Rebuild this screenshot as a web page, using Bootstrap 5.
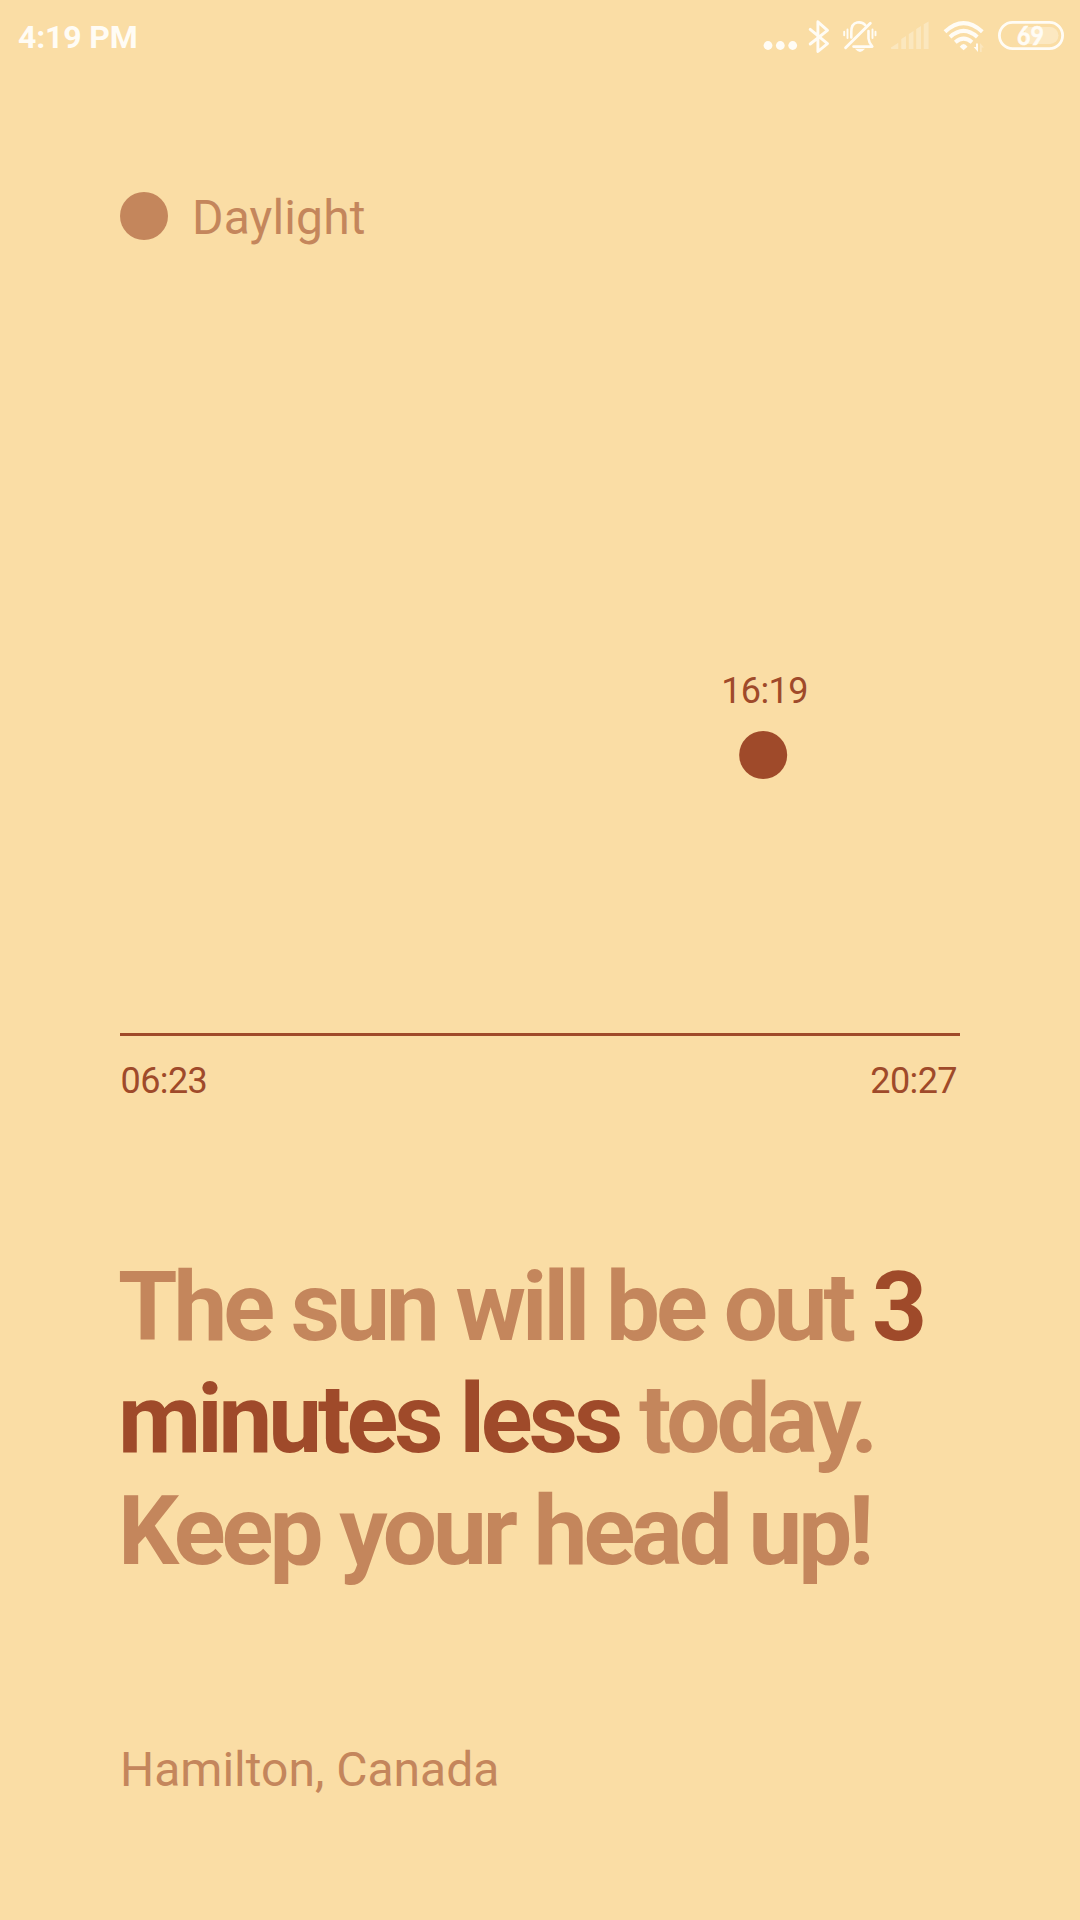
<!DOCTYPE html>
<html lang="en">
<head>
<meta charset="utf-8">
<meta name="viewport" content="width=device-width, initial-scale=1">
<title>Daylight</title>
<link rel="stylesheet" href="https://cdn.jsdelivr.net/npm/bootstrap@5.3.0/dist/css/bootstrap.min.css">
<style>
  body { background: #fadda5; color: #c4865c; font-family: Roboto, "Liberation Sans", sans-serif; }
  .screen { height: 1920px; width: 1080px; }
  .status { height: 72px; padding: 0 14px 0 18px; color: #fffcf5; }
  .clock { font-size: 32px; font-weight: 700; line-height: 38px; padding-top: 2px; letter-spacing: -.15px; }
  .content { padding: 116px 120px 0; }
  .brand { height: 56px; gap: 24px; font-size: 48px; line-height: 56px; }
  .brand span { padding-top: 4px; letter-spacing: .15px; }
  .disc { width: 48px; height: 48px; background: currentColor; }
  .strong-ink { color: #9f4a2a; }
  .sky { height: 789px; }
  .marker { top: 426px; transform: translateX(-50%); gap: 19px; }
  .marker-time { padding-left: 3px; }
  .times { font-size: 36px; line-height: 42px; letter-spacing: -.6px; }
  .horizon { border-top: 3px solid #9f4a2a; padding: 24px 3px 0 .6px; }
  .message { font-size: 96px; line-height: 112px; font-weight: 700; letter-spacing: -4.02px; margin: 149px -40px 0 -2px; }
  .place { font-size: 48px; line-height: 56px; margin-top: 155px; }
</style>
</head>
<body>
<div class="screen d-flex flex-column overflow-hidden">
  <header class="status d-flex align-items-start justify-content-between">
    <div class="clock align-self-start mt-3">4:19 PM</div>
    <div class="d-flex">
      <svg width="43" height="72" viewBox="760 0 43 72" fill="currentColor"><circle cx="768" cy="45.5" r="4.4"/><circle cx="780.3" cy="45.5" r="4.4"/><circle cx="792.7" cy="45.5" r="4.4"/></svg>
      <svg width="34" height="72" viewBox="803 0 34 72" fill="none" stroke="currentColor" stroke-width="2.9" stroke-linecap="round" stroke-linejoin="round"><path d="M810.2 29.3 827.5 43.6 817.9 51.5V21.8L827.5 30.3 810.2 44"/></svg>
      <svg width="48" height="72" viewBox="837 0 48 72" fill="none" stroke="currentColor" stroke-width="2.6" stroke-linecap="round" stroke-linejoin="round"><path d="M851.3 37.5V32C851.3 19.5 862 21.5 865.3 25.2M868.5 31V38.500Q868.800 42.500 872.300 46.600H853.500"/><path d="M870.300 23.200 845.600 47.700" stroke-width="2.900"/><path d="M855 48.800H865Q860 55 855 48.800Z" fill="currentColor" stroke="none"/><path d="M844.200 31.700V35.300M847.500 29.500V38M872.500 29.500V38M875.500 31.700V35.300" stroke-width="1.900"/></svg>
      <svg width="50" height="72" viewBox="885 0 50 72" fill="currentColor" opacity=".32"><path d="M891 47.500 898.300 42.800V49H892Q890.500 49 891 47.500ZM901.300 39 906 36V49H901.300ZM908.800 34 913.500 31V49H908.800ZM916.200 29 921 26V49H916.200ZM923.700 24.200 928.600 21.500V49H923.700Z"/></svg>
      <svg width="58" height="72" viewBox="935 0 58 72" fill="none" stroke="currentColor" stroke-width="4"><path d="M945 31.700Q963.500 14.500 982.300 31.700M950 36.900Q963.600 24.700 977.300 36.900M955.300 42.200Q963.600 35 972 42.200"/><path d="M963.600 50.200 959.700 46.700Q963.600 41.500 967.500 46.700Z" fill="currentColor" stroke="none"/><path d="M978 43.500V52L973.700 47H976V43.500Z" fill="currentColor" stroke="none"/><path d="M980 52V43L984 47.500H981.700V52Z" fill="currentColor" stroke="none" opacity=".3"/></svg>
      <svg width="73" height="72" viewBox="993 0 73 72" fill="none"><rect x="999.400" y="22.400" width="63.200" height="26.200" rx="13.100" stroke="currentColor" stroke-width="2.800"/><path d="M1025 27H1050A8.500 8.500 0 0 1 1050 44H1025Z" fill="currentColor" opacity=".35"/><text x="1017" y="45" font-family="Lato, sans-serif" font-size="26" font-weight="700" fill="currentColor" stroke="currentColor" stroke-width=".5" textLength="27" lengthAdjust="spacingAndGlyphs">69</text></svg>
    </div>
  </header>

  <main class="content">
    <div class="brand d-flex align-items-center"><div class="disc rounded-circle"></div><span>Daylight</span></div>
    <section class="sky position-relative strong-ink times">
      <div class="marker position-absolute d-flex flex-column align-items-center" style="left:76.55%">
        <div class="marker-time">16:19</div>
        <div class="disc rounded-circle"></div>
      </div>
    </section>
    <div class="horizon times strong-ink d-flex justify-content-between"><span>06:23</span><span>20:27</span></div>
    <h1 class="message mb-0">The sun will be out <span class="strong-ink">3<br>minutes less</span> today.<br>Keep your head up!</h1>
    <div class="place">Hamilton, Canada</div>
  </main>
</div>
<script src="https://cdn.jsdelivr.net/npm/bootstrap@5.3.0/dist/js/bootstrap.bundle.min.js"></script>
</body>
</html>
